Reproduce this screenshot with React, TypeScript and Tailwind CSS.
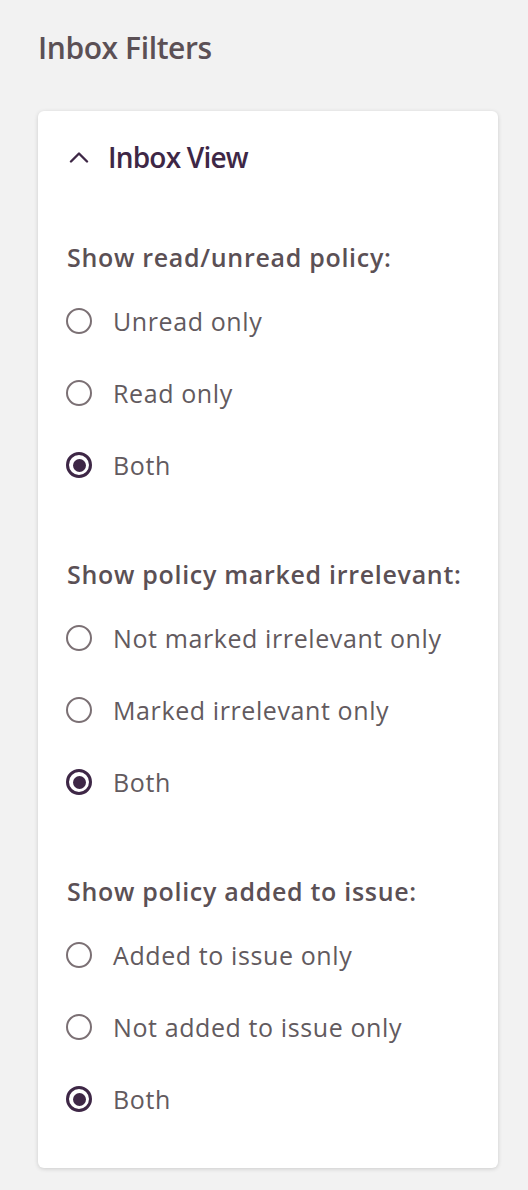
import React from "react";

type Group = { title: string; options: string[]; selected: number };

const groups: Group[] = [
  { title: "Show read/unread policy:", options: ["Unread only", "Read only", "Both"], selected: 2 },
  {
    title: "Show policy marked irrelevant:",
    options: ["Not marked irrelevant only", "Marked irrelevant only", "Both"],
    selected: 2,
  },
  {
    title: "Show policy added to issue:",
    options: ["Added to issue only", "Not added to issue only", "Both"],
    selected: 2,
  },
];

function Radio({ checked }: { checked: boolean }) {
  if (checked) {
    return (
      <span className="flex h-[26px] w-[26px] shrink-0 items-center justify-center rounded-full border-[3px] border-[#3e2746]">
        <span className="h-[13px] w-[13px] rounded-full bg-[#3e2746]" />
      </span>
    );
  }
  return <span className="h-[26px] w-[26px] shrink-0 rounded-full border-2 border-[#7b7074]" />;
}

export default function App() {
  return (
    <div
      className="min-h-[1190px] w-full bg-[#f2f2f2] pl-[38px] pr-[30px] pt-[28px]"
      style={{ fontFamily: '"Open Sans", "Liberation Sans", sans-serif' }}
    >
      <h1 className="h-[40px] text-[30px] font-semibold leading-[40px] tracking-[-0.4px] text-[#5b5055]">
        Inbox Filters
      </h1>
      <div className="mt-[43px] rounded-[6px] bg-white pb-[33px] pl-[28px] pr-[20px] pt-[22px] shadow-[0_1px_4px_rgba(0,0,0,0.16)]">
        <div className="flex h-[48px] items-center">
          <svg width="20" height="12" viewBox="0 0 20 12" className="ml-[3px]" fill="none">
            <polyline
              points="2,10.5 10,2.5 18,10.5"
              stroke="#3e2746"
              strokeWidth="2.4"
              strokeLinecap="round"
              strokeLinejoin="round"
            />
          </svg>
          <span className="ml-[19px] text-[28px] font-semibold leading-[40px] tracking-[-0.8px] text-[#3e2746]">
            Inbox View
          </span>
        </div>
        {groups.map((g, gi) => (
          <div key={gi} className={gi === 0 ? "mt-[58px]" : "mt-[55px]"}>
            <div className="ml-[1px] flex h-[36px] items-center text-[25px] font-semibold leading-[36px] tracking-[0.7px] text-[#5b5055]">
              {g.title}
            </div>
            <div className="mt-[10px] flex flex-col">
              {g.options.map((o, oi) => (
                <label key={oi} className="flex h-[72px] items-center">
                  <Radio checked={oi === g.selected} />
                  <span className="ml-[21px] text-[25px] leading-[36px] tracking-[0.6px] text-[#625a5e]">{o}</span>
                </label>
              ))}
            </div>
          </div>
        ))}
      </div>
    </div>
  );
}
